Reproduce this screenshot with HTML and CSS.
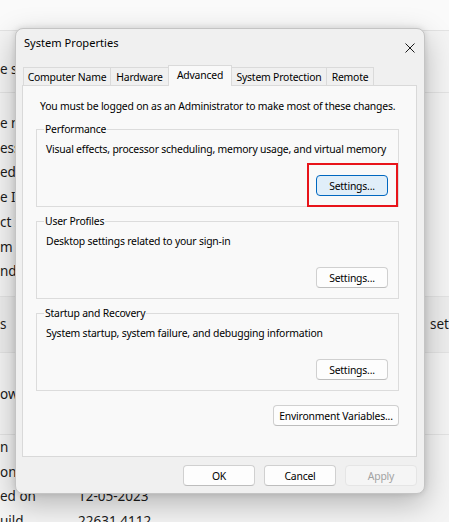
FILE: index.html
```html
<!DOCTYPE html>
<html>
<head>
<meta charset="utf-8">
<link rel="stylesheet" href="styles.css">
</head>
<body>
<div class="page">
  <div class="bg-top"></div>
  <div class="bg-row bg-a"><span class="bg-text">e settings</span></div>
  <div class="bg-row bg-b">
    <span class="bg-text">e name</span>
    <span class="bg-text">essor</span>
    <span class="bg-text">ed RAM</span>
    <span class="bg-text">e ID</span>
    <span class="bg-text">ct ID</span>
    <span class="bg-text">m type</span>
    <span class="bg-text">nd touch</span>
  </div>
  <div class="bg-row bg-c"><span class="bg-text">s</span><span class="bg-text">settings</span></div>
  <div class="bg-row bg-d"><span class="bg-text">ows</span></div>
  <div class="bg-row bg-e">
    <span class="bg-text">n</span><span class="bg-text"></span>
    <span class="bg-text">on</span><span class="bg-text"></span>
    <span class="bg-text">ed on</span><span class="bg-text">12-05-2023</span>
    <span class="bg-text">uild</span><span class="bg-text">22631.4112</span>
  </div>
</div>

<div class="dialog">
  <div class="titlebar">
    <span class="title">System Properties</span>
    <svg class="close" width="10" height="10" viewBox="0 0 10 10"><path d="M0.5 0.5 L9.5 9.5 M9.5 0.5 L0.5 9.5" stroke="#1a1a1a" stroke-width="1" fill="none"/></svg>
  </div>
  <div class="tabs">
    <div class="tab tab-cn">Computer Name</div>
    <div class="tab tab-hw">Hardware</div>
    <div class="tab tab-adv selected">Advanced</div>
    <div class="tab tab-sp">System Protection</div>
    <div class="tab tab-rm">Remote</div>
  </div>
  <div class="panel">
    <div class="intro">You must be logged on as an Administrator to make most of these changes.</div>
    <fieldset class="group">
      <legend>Performance</legend>
      <div class="desc">Visual effects, processor scheduling, memory usage, and virtual memory</div>
      <div class="group-actions"><button class="btn btn-focus">Settings...</button></div>
    </fieldset>
    <fieldset class="group">
      <legend>User Profiles</legend>
      <div class="desc">Desktop settings related to your sign-in</div>
      <div class="group-actions"><button class="btn">Settings...</button></div>
    </fieldset>
    <fieldset class="group">
      <legend>Startup and Recovery</legend>
      <div class="desc">System startup, system failure, and debugging information</div>
      <div class="group-actions"><button class="btn">Settings...</button></div>
    </fieldset>
    <div class="env-row"><button class="btn btn-env">Environment Variables...</button></div>
  </div>
  <div class="footer">
    <button class="btn">OK</button>
    <button class="btn">Cancel</button>
    <button class="btn btn-disabled">Apply</button>
  </div>
</div>
</body>
</html>
```
FILE: styles.css
```css
html, body {
  margin: 0;
  padding: 0;
}
body {
  width: 449px;
  height: 522px;
  overflow: hidden;
  position: relative;
  background: #f3f3f3;
  font-family: "Noto Sans", "Open Sans", sans-serif;
}

/* ---------- background settings page ---------- */
.page {
  display: flex;
  flex-direction: column;
  color: #1b1b1b;
  font-size: 13.5px;
  width: 449px;
  overflow: hidden;
}
.bg-top {
  height: 30px;
  background: #fafafa;
  border-bottom: 1px solid #e3e3e3;
}
.bg-row {
  background: #f4f4f4;
  border-bottom: 1px solid #e3e3e3;
  box-sizing: border-box;
  white-space: nowrap;
}
.bg-text {
  line-height: 20px;
}
.bg-a {
  height: 62px;
  padding-top: 28px;
}
.bg-b {
  height: 204px;
  padding-top: 18px;
  display: flex;
  flex-direction: column;
}
.bg-b .bg-text {
  line-height: 24.7px;
}
.bg-c {
  height: 56px;
  padding-top: 17px;
  background: #ededed;
  display: grid;
  grid-template-columns: 430px 19px;
  overflow: hidden;
}
.bg-d {
  height: 82px;
  padding-top: 31px;
}
.bg-e {
  height: 88px;
  padding-top: 0;
  border-bottom: none;
  display: grid;
  grid-template-columns: 78px 1fr;
  grid-auto-rows: 24.6px;
  align-items: center;
  overflow: hidden;
}

/* ---------- dialog ---------- */
.dialog {
  position: absolute;
  left: 15px;
  top: 28px;
  width: 410px;
  height: 466px;
  box-sizing: border-box;
  background: #f0f0f0;
  border: 1px solid #c4c4c4;
  border-radius: 8px;
  box-shadow: 0 10px 30px rgba(0, 0, 0, 0.26), 0 0 6px rgba(0, 0, 0, 0.12);
  display: flex;
  flex-direction: column;
  font-size: 10.4px;
  letter-spacing: -0.2px;
  color: #000;
}
.titlebar {
  height: 36px;
  box-sizing: border-box;
  display: flex;
  justify-content: space-between;
  align-items: flex-start;
  padding: 6px 9px 0 8px;
}
.title {
  line-height: 16px;
  font-size: 11.1px;
  letter-spacing: 0;
}
.close {
  margin-top: 8px;
  display: block;
}

.tabs {
  display: flex;
  align-items: flex-end;
  height: 21px;
  margin: 0 0 -1px 7px;
  position: relative;
  z-index: 1;
}
.tab {
  box-sizing: border-box;
  height: 19px;
  border: 1px solid #dadada;
  background: #f0f0f0;
  margin-left: -1px;
  display: flex;
  align-items: center;
  justify-content: center;
  line-height: 16px;
  white-space: nowrap;
}
.tab:first-child {
  margin-left: 0;
}
.tab.selected {
  height: 21px;
  background: #f9f9f9;
  border-bottom: none;
  position: relative;
  z-index: 2;
  padding-bottom: 3px;
}
.tab-cn { width: 88px; }
.tab-hw { width: 59px; }
.tab-adv { width: 64px; }
.tab-sp { width: 96px; }
.tab-rm { width: 48px; }

.panel {
  box-sizing: border-box;
  height: 372px;
  margin: 0 7px 0 6px;
  background: #f9f9f9;
  border: 1px solid #d9d9d9;
  padding: 12px 17px 0 13px;
  display: flex;
  flex-direction: column;
}
.intro {
  line-height: 16px;
  padding-left: 4px;
  white-space: nowrap;
}
.group {
  margin: 7px 0 0 0;
  padding: 4px 10px 10px 9px;
  border: 1px solid #dcdcdc;
  min-width: 0;
}
.group + .group {
  margin-top: 6px;
}
.group legend {
  padding: 0 1px;
  margin-left: -2px;
  line-height: 16px;
}
.desc {
  line-height: 16px;
  white-space: nowrap;
}
.group-actions {
  display: flex;
  justify-content: flex-end;
  margin-top: 18px;
}
.env-row {
  display: flex;
  justify-content: flex-end;
  margin-top: 14px;
}

.btn {
  box-sizing: border-box;
  width: 72px;
  height: 21px;
  padding: 0;
  margin: 0;
  font-family: inherit;
  font-size: 10.4px;
  letter-spacing: -0.2px;
  color: #000;
  background: #fdfdfd;
  border: 1px solid #d0d0d0;
  border-bottom-color: #bdbdbd;
  border-radius: 4px;
  line-height: 16px;
  white-space: nowrap;
}
.btn-focus {
  background: #e0eef9;
  border: 1px solid #0067c0;
  position: relative;
}
.btn-focus::after {
  content: "";
  position: absolute;
  top: -13px;
  bottom: -12px;
  left: -10px;
  right: -11px;
  border: 2px solid #e8141a;
}
.btn-env {
  width: 126px;
}
.btn-disabled {
  background: #f5f5f5;
  border: 1px solid #e5e5e5;
  color: #a2a2a2;
}

.footer {
  display: flex;
  justify-content: flex-end;
  gap: 9px;
  margin-top: 8px;
  padding-right: 7px;
}
```
